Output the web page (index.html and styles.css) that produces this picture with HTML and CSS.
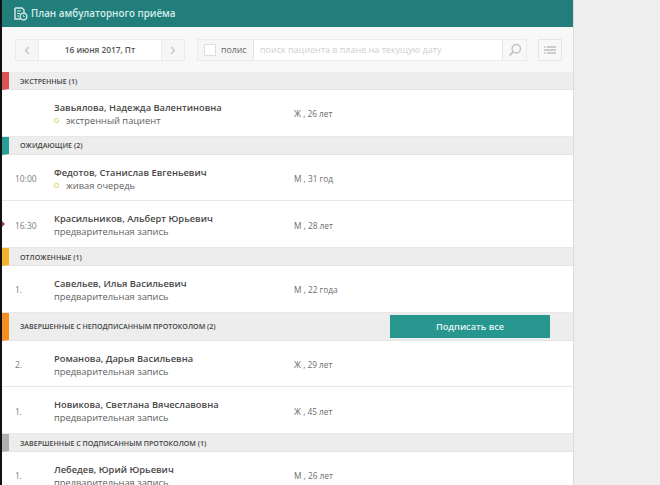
FILE: index.html
```html
<!DOCTYPE html>
<html lang="ru">
<head>
<meta charset="utf-8">
<title>План амбулаторного приёма</title>
<link rel="stylesheet" href="styles.css">
</head>
<body>
<main class="panel">
  <header class="topbar">
    <svg class="topbar-icon" width="14" height="14" viewBox="0 0 14 14"><path d="M1 1h7l2 2v3" fill="none" stroke="#d5ecea" stroke-width="1.4"/><path d="M1 1v11h5" fill="none" stroke="#d5ecea" stroke-width="1.4"/><path d="M3 4h4M3 6.500h3M3 9h2" stroke="#d5ecea"/><circle cx="9.500" cy="9.500" r="3.300" fill="none" stroke="#d5ecea" stroke-width="1.300"/><path d="M9.500 7.800v1.900h1.500" fill="none" stroke="#d5ecea" stroke-width=".8"/></svg>
    <h1 class="topbar-title">План амбулаторного приёма</h1>
  </header>
  <div class="toolbar">
    <div class="date-picker">
      <button class="date-arrow"><svg width="6" height="9" viewBox="0 0 6 9"><path d="M5 1 1.500 4.500 5 8" fill="none" stroke="#c4c4c4" stroke-width="1.200"/></svg></button>
      <div class="date-value">16 июня 2017, Пт</div>
      <button class="date-arrow"><svg width="6" height="9" viewBox="0 0 6 9"><path d="M1 1l3.500 3.500L1 8" fill="none" stroke="#c4c4c4" stroke-width="1.200"/></svg></button>
    </div>
    <div class="search">
      <label class="policy"><span class="checkbox"></span>полис</label>
      <div class="search-input">поиск пациента в плане на текущую дату</div>
      <button class="search-btn"><svg width="14" height="14" viewBox="0 0 14 14"><circle cx="8.300" cy="5.700" r="4.200" fill="none" stroke="#c4c4c4" stroke-width="1.500"/><path d="M5.300 8.700 1.500 12.500" stroke="#c4c4c4" stroke-width="1.800"/></svg></button>
    </div>
    <button class="list-btn"><svg width="12" height="8" viewBox="0 0 12 8"><path d="M3 1h9M0 4h12M3 7h9" stroke="#bdbdbd" stroke-width="1.300"/><path d="M0 1h1.500M0 7h1.500" stroke="#bdbdbd" stroke-width="1.300"/></svg></button>
  </div>

  <section class="group group-red">
    <div class="group-head">Экстренные (1)</div>
    <div class="row">
      <div class="row-time"></div>
      <div class="row-main"><div class="row-name">Завьялова, Надежда Валентиновна</div><div class="row-sub"><span class="dot"></span>экстренный пациент</div></div>
      <div class="row-age">Ж , 26 лет</div>
    </div>
  </section>

  <section class="group group-teal">
    <div class="group-head">Ожидающие (2)</div>
    <div class="row">
      <div class="row-time">10:00</div>
      <div class="row-main"><div class="row-name">Федотов, Станислав Евгеньевич</div><div class="row-sub"><span class="dot"></span>живая очередь</div></div>
      <div class="row-age">М , 31 год</div>
    </div>
    <div class="row row-marked">
      <div class="row-time">16:30</div>
      <div class="row-main"><div class="row-name">Красильников, Альберт Юрьевич</div><div class="row-sub">предварительная запись</div></div>
      <div class="row-age">М , 28 лет</div>
    </div>
  </section>

  <section class="group group-yellow">
    <div class="group-head">Отложенные (1)</div>
    <div class="row">
      <div class="row-time">1.</div>
      <div class="row-main"><div class="row-name">Савельев, Илья Васильевич</div><div class="row-sub">предварительная запись</div></div>
      <div class="row-age">М , 22 года</div>
    </div>
  </section>

  <section class="group group-orange">
    <div class="group-head group-head-action"><span class="group-label">Завершенные с неподписанным протоколом (2)</span><button class="sign-btn">Подписать все</button></div>
    <div class="row">
      <div class="row-time">2.</div>
      <div class="row-main"><div class="row-name">Романова, Дарья Васильевна</div><div class="row-sub">предварительная запись</div></div>
      <div class="row-age">Ж , 29 лет</div>
    </div>
    <div class="row">
      <div class="row-time">1.</div>
      <div class="row-main"><div class="row-name">Новикова, Светлана Вячеславовна</div><div class="row-sub">предварительная запись</div></div>
      <div class="row-age">Ж , 45 лет</div>
    </div>
  </section>

  <section class="group group-gray">
    <div class="group-head">Завершенные с подписанным протоколом (1)</div>
    <div class="row">
      <div class="row-time">1.</div>
      <div class="row-main"><div class="row-name">Лебедев, Юрий Юрьевич</div><div class="row-sub">предварительная запись</div></div>
      <div class="row-age">М , 26 лет</div>
    </div>
  </section>
</main>
</body>
</html>
```
FILE: styles.css
```css
* { box-sizing: border-box; }
html, body { margin: 0; height: 100%; overflow: hidden; }
body {
  background: #eeeeef;
  font-family: "Open Sans", "Noto Sans", sans-serif;
  color: #4c4c4c;
}
button { font-family: inherit; padding: 0; cursor: pointer; }

.panel {
  width: 574px;
  height: 485px;
  overflow: hidden;
  background: #fff;
  border-left: 2px solid #111;
  border-right: 1px solid #dcdcdc;
}

.topbar {
  height: 27px;
  background: #217e7a;
  display: flex;
  align-items: center;
  padding-left: 12px;
  gap: 3px;
}
.topbar-title { margin: 0; font-size: 9.800px; font-weight: 600; color: #d5ecea; }

.toolbar {
  height: 45px;
  background: #f8f8f8;
  display: flex;
  align-items: flex-start;
  padding: 12px 0 0 13px;
}
.date-picker {
  display: flex;
  width: 170px;
  height: 22px;
  border: 1px solid #ebebeb;
  background: #fff;
}
.date-arrow {
  width: 22px;
  border: 0;
  background: #f6f6f6;
  display: flex;
  align-items: center;
  justify-content: center;
}
.date-value {
  flex: 1;
  text-align: center;
  font-size: 8.300px;
  font-weight: 600;
  line-height: 20px;
  color: #555;
  border-left: 1px solid #ebebeb;
  border-right: 1px solid #ebebeb;
}
.search {
  display: flex;
  width: 330px;
  height: 22px;
  margin-left: 12px;
  border: 1px solid #ebebeb;
  background: #f6f6f6;
}
.policy {
  width: 55px;
  display: flex;
  align-items: center;
  padding-left: 6px;
  gap: 5px;
  font-size: 8.800px;
  color: #666;
}
.checkbox { width: 12px; height: 12px; border: 1px solid #dedede; background: #fff; }
.search-input {
  flex: 1;
  background: #fff;
  border: 1px solid #e4e4e4;
  border-width: 0 1px;
  padding-left: 6px;
  font-size: 9px;
  line-height: 20px;
  color: #d0d0d0;
}
.search-btn {
  width: 23px;
  border: 0;
  background: #f8f8f8;
  display: flex;
  align-items: center;
  justify-content: center;
}
.list-btn {
  width: 24px;
  height: 22px;
  margin-left: 11px;
  border: 1px solid #e6e6e6;
  background: #f8f8f8;
  display: flex;
  align-items: center;
  justify-content: center;
}

.group-head {
  height: 18px;
  display: flex;
  align-items: center;
  padding-left: 11px;
  background: #ededed;
  border-bottom: 1px solid #e4e4e4;
  border-left: 7px solid #777;
  font-size: 7.100px;
  font-weight: 600;
  text-transform: uppercase;
  color: #444;
}
.group-head-action {
  height: 28px;
  justify-content: space-between;
  padding-right: 23px;
}
.group-label { display: block; }
.group-red .group-head { border-left-color: #d9534f; }
.group-teal .group-head { border-left-color: #2a9d97; }
.group-yellow .group-head { border-left-color: #f6b22b; }
.group-orange .group-head { border-left-color: #f68f1e; }
.group-gray .group-head { border-left-color: #b0b0b0; }

.sign-btn {
  width: 160px;
  height: 23px;
  border: 0;
  background: #26968f;
  color: #e4f4f3;
  font-size: 9.200px;
  font-weight: 600;
}

.row {
  height: 46.700px;
  padding-top: 2px;
  display: flex;
  align-items: center;
  border-bottom: 1px solid #e8e8e8;
  position: relative;
}
.row-marked::before {
  content: "";
  position: absolute;
  left: 0;
  top: 20px;
  border: 3px solid transparent;
  border-left-color: #a5465a;
}
.row-time { width: 52px; padding-left: 13px; font-size: 8.500px; color: #7c7c7c; }
.row-main { width: 240px; }
.row-name { font-size: 9.300px; font-weight: 600; line-height: 13px; color: #484848; }
.row-sub { font-size: 9.300px; line-height: 13px; color: #5e5e5e; display: flex; align-items: center; }
.dot { width: 5px; height: 5px; margin-right: 7px; border: 1px solid #e3d873; border-radius: 2px; }
.row-age { font-size: 8.300px; color: #6c6c6c; }
```
